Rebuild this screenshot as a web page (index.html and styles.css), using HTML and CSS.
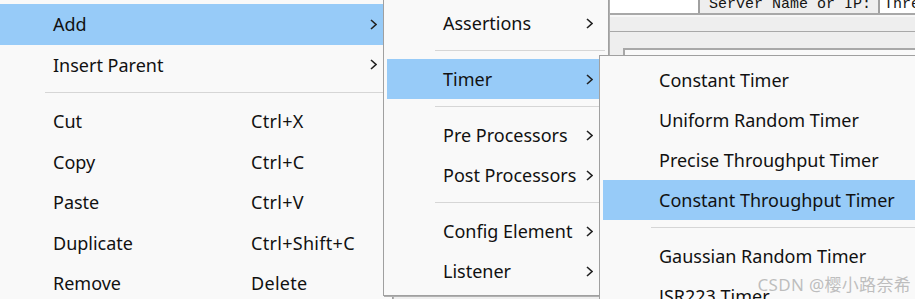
FILE: index.html
```html
<!DOCTYPE html>
<html lang="en">
<head>
  <meta charset="UTF-8" />
  <title>Context Menu - Add Timer</title>
  <link rel="stylesheet" href="styles.css">
</head>

<body>
  <div class="app">
    <div class="fieldbar">
      <div class="field field-host"></div>
      <div class="field-label">Server Name or IP:</div>
      <div class="field field-name">Thread Group</div>
    </div>
    <div class="strip"></div>
    <div class="workspace">
      <div class="panel"></div>
    </div>
  </div>

  <div class="menu menu-main">
    <div class="item active"><span class="label">Add</span>
      <svg class="arrow" viewBox="0 0 7 11"><polyline points="1,1 6,5.5 1,10" /></svg>
    </div>
    <div class="item"><span class="label">Insert Parent</span>
      <svg class="arrow" viewBox="0 0 7 11"><polyline points="1,1 6,5.5 1,10" /></svg>
    </div>
    <div class="sep"></div>
    <div class="item"><span class="label">Cut</span><span class="key">Ctrl+X</span></div>
    <div class="item"><span class="label">Copy</span><span class="key">Ctrl+C</span></div>
    <div class="item"><span class="label">Paste</span><span class="key">Ctrl+V</span></div>
    <div class="item"><span class="label">Duplicate</span><span class="key">Ctrl+Shift+C</span></div>
    <div class="item"><span class="label">Remove</span><span class="key">Delete</span></div>
  </div>

  <div class="menu menu-add">
    <div class="item"><span class="label">Assertions</span>
      <svg class="arrow" viewBox="0 0 7 11"><polyline points="1,1 6,5.5 1,10" /></svg>
    </div>
    <div class="sep"></div>
    <div class="item active"><span class="label">Timer</span>
      <svg class="arrow" viewBox="0 0 7 11"><polyline points="1,1 6,5.5 1,10" /></svg>
    </div>
    <div class="sep"></div>
    <div class="item"><span class="label">Pre Processors</span>
      <svg class="arrow" viewBox="0 0 7 11"><polyline points="1,1 6,5.5 1,10" /></svg>
    </div>
    <div class="item"><span class="label">Post Processors</span>
      <svg class="arrow" viewBox="0 0 7 11"><polyline points="1,1 6,5.5 1,10" /></svg>
    </div>
    <div class="sep"></div>
    <div class="item"><span class="label">Config Element</span>
      <svg class="arrow" viewBox="0 0 7 11"><polyline points="1,1 6,5.5 1,10" /></svg>
    </div>
    <div class="item"><span class="label">Listener</span>
      <svg class="arrow" viewBox="0 0 7 11"><polyline points="1,1 6,5.5 1,10" /></svg>
    </div>
  </div>

  <div class="menu menu-timer">
    <div class="item"><span class="label">Constant Timer</span></div>
    <div class="item"><span class="label">Uniform Random Timer</span></div>
    <div class="item"><span class="label">Precise Throughput Timer</span></div>
    <div class="item active"><span class="label">Constant Throughput Timer</span></div>
    <div class="sep"></div>
    <div class="item"><span class="label">Gaussian Random Timer</span></div>
    <div class="item"><span class="label">JSR223 Timer</span></div>
  </div>

  <div class="watermark">CSDN @樱小路奈希</div>
</body>
</html>
```

FILE: styles.css
```css
* {
  box-sizing: border-box;
  margin: 0;
  padding: 0;
}

body {
  width: 915px;
  height: 299px;
  overflow: hidden;
  position: relative;
  background-color: rgb(238, 238, 238);
  font-family: "Noto Sans", "Open Sans", sans-serif;
}

/* window behind the popup */
.fieldbar {
  display: flex;
  height: 15px;
  overflow: hidden;
  border-bottom: 2px solid rgb(168, 168, 168);
  font-family: "Liberation Mono", monospace;
  font-size: 15px;
  line-height: 9px;
  color: rgb(20, 20, 20);
}

.field {
  background-color: rgb(255, 255, 255);
}

.field-host {
  flex: 0 0 700px;
  border-right: 2px solid rgb(160, 160, 160);
}

.field-label {
  flex: 0 0 178px;
  padding-left: 9px;
  white-space: nowrap;
}

.field-name {
  flex: 1;
  border-left: 2px solid rgb(160, 160, 160);
  padding-left: 4px;
  white-space: nowrap;
}

.strip {
  height: 17px;
  border-top: 2px solid rgb(247, 247, 247);
  border-bottom: 1px solid rgb(168, 168, 168);
}

.workspace {
  padding-top: 16px;
  padding-left: 623px;
}

.panel {
  height: 260px;
  background-color: rgb(250, 250, 250);
  border-top: 2px solid rgb(168, 168, 168);
  border-left: 2px solid rgb(168, 168, 168);
}

/* popup menus */
.menu {
  position: absolute;
  background-color: rgb(249, 249, 249);
  border: 1px solid rgb(160, 160, 160);
  box-shadow: 1px 1px 0 rgb(176, 176, 176);
  padding-top: 4px;
  padding-bottom: 4px;
  padding-left: 3px;
  padding-right: 3px;
}

.menu-main {
  left: -7px;
  top: -1px;
  width: 400px;
  z-index: 1;
}

.menu-add {
  left: 383px;
  top: -2px;
  width: 226px;
  z-index: 2;
}

.menu-timer {
  left: 599px;
  top: 55px;
  width: 340px;
  z-index: 3;
}

.item {
  display: flex;
  align-items: center;
  height: 40px;
  padding-left: 56px;
  padding-right: 12px;
  font-size: 18px;
  color: rgb(17, 17, 17);
  white-space: nowrap;
}

.menu-main .item {
  height: 40.5px;
}

.item.active {
  background-color: rgb(151, 203, 248);
}

.menu-main .label {
  width: 198px;
}

.key {
  letter-spacing: 0.3px;
}

.arrow {
  margin-left: auto;
  width: 7px;
  height: 11px;
  fill: none;
  stroke: rgb(34, 34, 34);
  stroke-width: 1.6;
}

.sep {
  height: 16px;
  padding-top: 7px;
  padding-left: 48px;
}
.sep::before {
  content: "";
  display: block;
  height: 1px;
  background-color: rgb(214, 214, 214);
}

.watermark {
  position: absolute;
  right: 4px;
  top: 271px;
  z-index: 4;
  font-family: "Noto Sans", "Noto Sans CJK SC", sans-serif;
  font-size: 17px;
  letter-spacing: 0.3px;
  color: rgba(170, 170, 170, 0.75);
  white-space: nowrap;
}
```
